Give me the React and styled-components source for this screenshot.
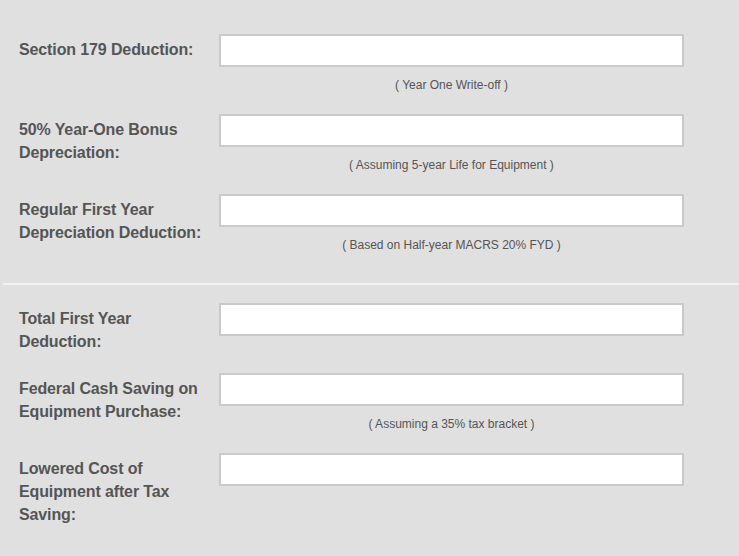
import React from "react";
import styled, { createGlobalStyle } from "styled-components";

const GlobalStyle = createGlobalStyle`
  * { box-sizing: border-box; }
  html, body {
    margin: 0;
    padding: 0;
    background: #e0e0e0;
  }
  body {
    font-family: "Liberation Sans", Arial, sans-serif;
    color: #555555;
  }
`;

const Page = styled.div`
  width: 739px;
  min-height: 556px;
  background: #e0e0e0;
`;

const Section = styled.div`
  display: flex;
  flex-direction: column;
  gap: 20px;
  padding: ${(p) => p.$pad};
`;

const Divider = styled.div`
  height: 2px;
  margin-left: 3px;
  background: #f3f3f3;
`;

const Row = styled.div`
  display: flex;
  align-items: flex-start;
  padding-left: 19px;
`;

const Label = styled.label`
  width: 200px;
  flex: none;
  padding: 4px 8px 0 0;
  font-size: 16px;
  font-weight: bold;
  line-height: 23px;
  letter-spacing: -0.12px;
  color: #555555;
`;

const Field = styled.div`
  width: 465px;
  display: flex;
  flex-direction: column;
  align-items: center;
`;

const Input = styled.input`
  width: 100%;
  height: 33px;
  border: 2px solid #c9c9c9;
  background: #ffffff;
  outline: none;
  font-family: inherit;
  font-size: 14px;
`;

const Note = styled.div`
  margin-top: 10px;
  font-size: 12px;
  line-height: 17px;
  color: #555555;
`;

const top = [
  { label: "Section 179 Deduction:", note: "( Year One Write-off )" },
  { label: "50% Year-One Bonus Depreciation:", note: "( Assuming 5-year Life for Equipment )" },
  { label: "Regular First Year Depreciation Deduction:", note: "( Based on Half-year MACRS 20% FYD )" },
];

const bottom = [
  { label: "Total First Year Deduction:" },
  { label: "Federal Cash Saving on Equipment Purchase:", note: "( Assuming a 35% tax bracket )" },
  { label: "Lowered Cost of Equipment after Tax Saving:" },
];

function FormRow({ label, note }) {
  return (
    <Row>
      <Label>{label}</Label>
      <Field>
        <Input type="text" />
        {note && <Note>{note}</Note>}
      </Field>
    </Row>
  );
}

export default function App() {
  return (
    <Page>
      <GlobalStyle />
      <Section $pad="34px 0 29px">
        {top.map((r) => (
          <FormRow key={r.label} {...r} />
        ))}
      </Section>
      <Divider />
      <Section $pad="18px 0 20px">
        {bottom.map((r) => (
          <FormRow key={r.label} {...r} />
        ))}
      </Section>
    </Page>
  );
}
